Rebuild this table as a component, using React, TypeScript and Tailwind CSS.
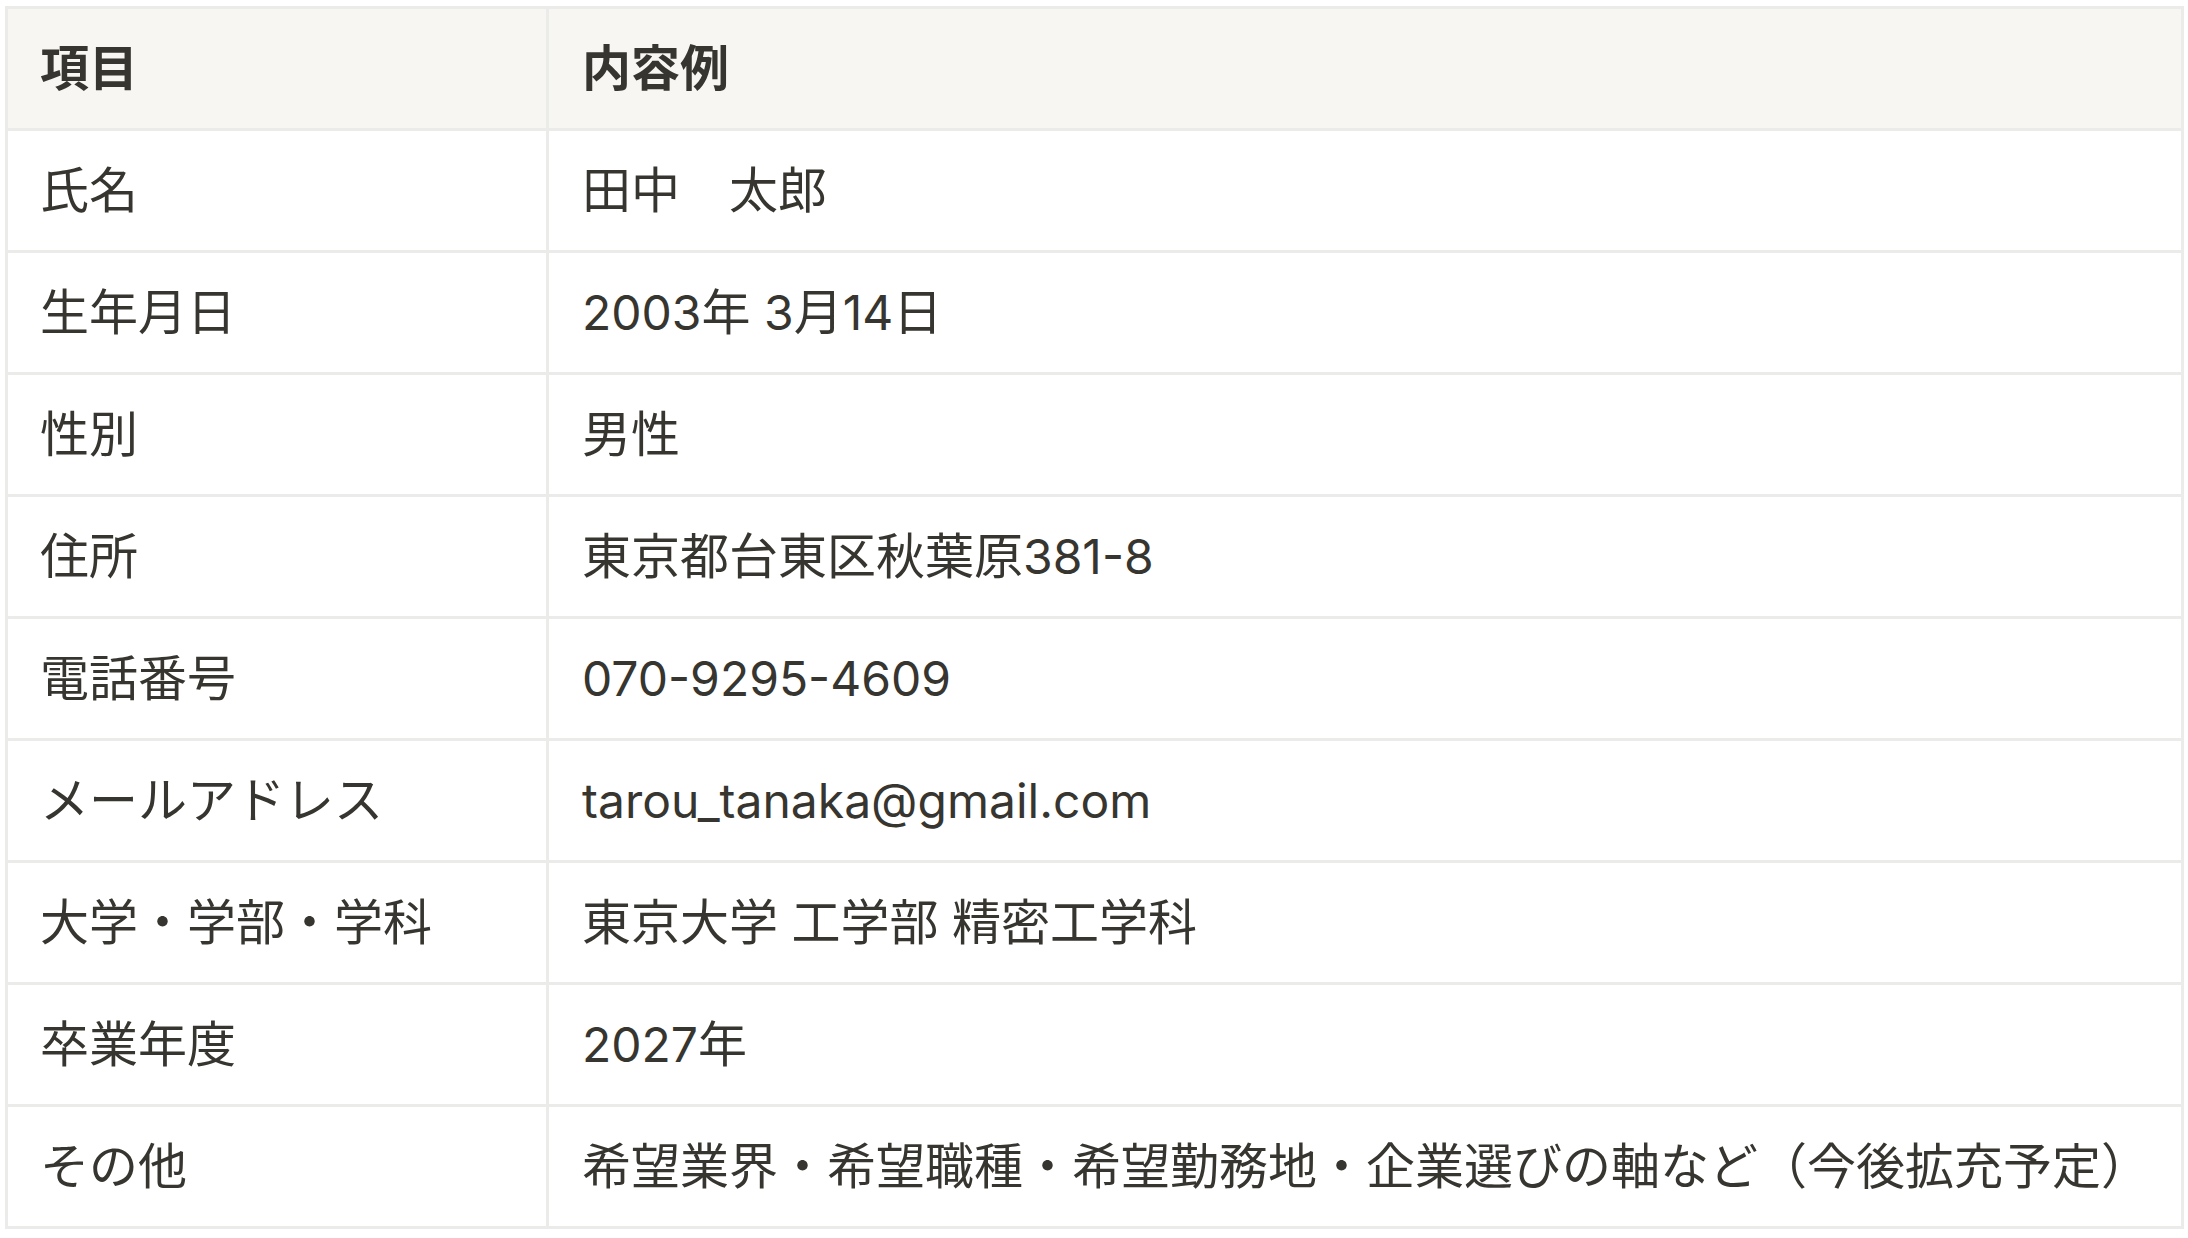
const rows: [string, string][] = [
  ["氏名", "田中　太郎"],
  ["生年月日", "2003年 3月14日"],
  ["性別", "男性"],
  ["住所", "東京都台東区秋葉原381-8"],
  ["電話番号", "070-9295-4609"],
  ["メールアドレス", "tarou_tanaka@gmail.com"],
  ["大学・学部・学科", "東京大学 工学部 精密工学科"],
  ["卒業年度", "2027年"],
  ["その他", "希望業界・希望職種・希望勤務地・企業選びの軸など（今後拡充予定）"],
];

const font = { fontFamily: 'Inter, "Noto Sans CJK JP", sans-serif' };

// latin runs come out a touch smaller than the kana/kanji in the reference
function Text({ value }: { value: string }) {
  const parts = value.split(/([\x20-\x7e]+)/).filter(Boolean);
  return (
    <>
      {parts.map((p, i) =>
        /^[\x20-\x7e]+$/.test(p) ? (
          <span key={i} className="text-[48px]">
            {p}
          </span>
        ) : (
          <span key={i}>{p}</span>
        )
      )}
    </>
  );
}

export default function App() {
  return (
    <div className="min-h-screen w-full bg-white pt-[6px] pl-[5px]" style={font}>
      <div className="grid w-[2179px] grid-cols-[541px_1fr] border-l-[3px] border-t-[3px] border-[#ebebe9] text-[49px] leading-none text-[#37352f]">
        {/* header */}
        <div className="flex h-[122px] items-center border-b-[3px] border-r-[3px] border-[#ebebe9] bg-[#f7f6f3] pl-[32px] font-bold">
          項目
        </div>
        <div className="flex h-[122px] items-center border-b-[3px] border-r-[3px] border-[#ebebe9] bg-[#f7f6f3] pl-[33px] font-bold">
          内容例
        </div>

        {rows.map(([label, value]) => (
          <div key={label} className="contents">
            <div className="flex h-[122px] items-center border-b-[3px] border-r-[3px] border-[#ebebe9] pl-[32px]">
              <span>{label}</span>
            </div>
            <div className="flex h-[122px] items-center whitespace-nowrap border-b-[3px] border-r-[3px] border-[#ebebe9] pl-[33px]">
              <span>
                <Text value={value} />
              </span>
            </div>
          </div>
        ))}
      </div>
    </div>
  );
}
